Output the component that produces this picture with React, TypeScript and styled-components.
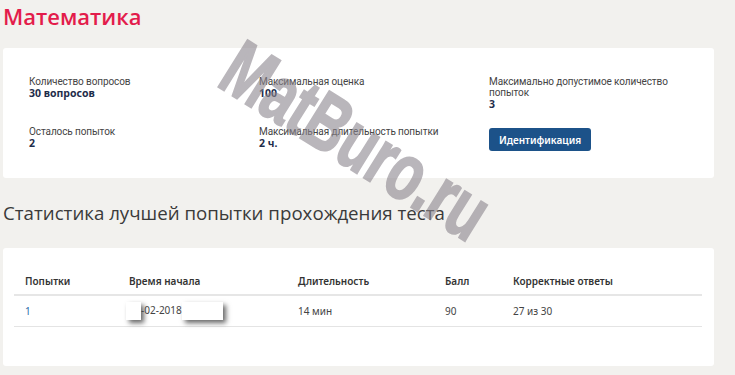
import React from "react";
import styled, { createGlobalStyle } from "styled-components";

const GlobalStyle = createGlobalStyle`
  html, body {
    margin: 0;
    padding: 0;
    background: #f2f1ee;
  }
  body {
    font-family: "Open Sans", "Noto Sans", sans-serif;
    color: #333333;
  }
`;

const Page = styled.div`
  position: relative;
  width: 735px;
  height: 375px;
  overflow: hidden;
  padding: 0 21px 0 3px;
  box-sizing: border-box;
`;

const Title = styled.h1`
  margin: 0;
  padding-top: 1px;
  font-size: 22px;
  line-height: 30px;
  font-weight: 600;
  color: #e31c4b;
`;

const Card = styled.section<{ $top: number; $height: number }>`
  margin-top: ${(p) => p.$top}px;
  height: ${(p) => p.$height}px;
  background: #ffffff;
  border-radius: 3px;
  box-sizing: border-box;
`;

const InfoGrid = styled.div`
  display: grid;
  grid-template-columns: 230px 230px 200px;
  row-gap: 16px;
  padding: 28px 0 0 26px;
`;

const InfoItem = styled.div`
  display: flex;
  flex-direction: column;
  align-items: flex-start;
`;

const Label = styled.span`
  font-family: Roboto, "Noto Sans", sans-serif;
  font-size: 10px;
  line-height: 11px;
  letter-spacing: -0.1px;
  color: #444444;
`;

const Value = styled.span`
  font-family: "Noto Sans", "Open Sans", sans-serif;
  font-size: 10.5px;
  line-height: 12px;
  font-weight: 700;
  color: #1e2d4b;
`;

const IdButton = styled.button`
  margin-top: 2px;
  width: 102px;
  height: 23px;
  padding: 0;
  border: none;
  border-radius: 3px;
  background: #1c5289;
  color: #ffffff;
  font-family: "Noto Sans", "Open Sans", sans-serif;
  font-size: 10px;
  font-weight: 600;
  cursor: pointer;
`;

const SectionTitle = styled.h2`
  margin: 0;
  padding-top: 22px;
  font-size: 18.7px;
  line-height: 26px;
  font-weight: 400;
  color: #3a3a3a;
`;

const Spacer = styled.div`
  height: 20px;
`;

const Table = styled.table`
  margin: 0 12px 0 11px;
  width: calc(100% - 23px);
  border-collapse: collapse;
  table-layout: fixed;
  font-family: "Noto Sans", "Open Sans", sans-serif;
  font-size: 10px;
`;

const HeadCell = styled.th<{ $w?: number }>`
  width: ${(p) => (p.$w ? `${p.$w}px` : "auto")};
  height: 26px;
  padding: 0 0 0 11px;
  text-align: left;
  font-weight: 600;
  color: #333333;
  border-bottom: 2px solid #e6e6e6;
`;

const Cell = styled.td<{ $link?: boolean }>`
  height: 30px;
  padding: 0 0 0 11px;
  color: ${(p) => (p.$link ? "#2c6aa8" : "#444444")};
  border-bottom: 1px solid #e4e4e4;
  white-space: nowrap;
`;

const Redact = styled.span<{ $w: number; $shift?: number }>`
  display: inline-block;
  width: ${(p) => p.$w}px;
  height: 18px;
  margin-left: ${(p) => p.$shift ?? 0}px;
  vertical-align: middle;
  background: #ffffff;
  box-shadow: 3px 3px 5px rgba(0, 0, 0, 0.6);
`;

const Watermark = styled.div`
  position: absolute;
  left: 356px;
  top: 141px;
  transform: translate(-50%, -50%) rotate(32deg) scaleX(0.7);
  font-family: "Liberation Sans", Arial, sans-serif;
  font-size: 80px;
  font-weight: 700;
  line-height: 1;
  white-space: nowrap;
  color: #8c868e;
  -webkit-text-stroke: 2px #8c868e;
  opacity: 0.6;
  pointer-events: none;
`;

const info = [
  { label: "Количество вопросов", value: "30 вопросов" },
  { label: "Максимальная оценка", value: "100" },
  { label: "Максимально допустимое количество попыток", value: "3" },
  { label: "Осталось попыток", value: "2" },
  { label: "Максимальная длительность попытки", value: "2 ч." },
];

export default function App() {
  return (
    <Page>
      <GlobalStyle />
      <Title>Математика</Title>
      <Card $top={17} $height={130}>
        <InfoGrid>
          {info.map((it) => (
            <InfoItem key={it.label}>
              <Label>{it.label}</Label>
              <Value>{it.value}</Value>
            </InfoItem>
          ))}
          <InfoItem>
            <IdButton>Идентификация</IdButton>
          </InfoItem>
        </InfoGrid>
      </Card>
      <SectionTitle>Статистика лучшей попытки прохождения теста</SectionTitle>
      <Card $top={22} $height={118}>
        <Spacer />
        <Table>
          <thead>
            <tr>
              <HeadCell $w={93}>Попытки</HeadCell>
              <HeadCell $w={158}>Время начала</HeadCell>
              <HeadCell $w={136}>Длительность</HeadCell>
              <HeadCell $w={57}>Балл</HeadCell>
              <HeadCell>Корректные ответы</HeadCell>
            </tr>
          </thead>
          <tbody>
            <tr>
              <Cell $link>1</Cell>
              <Cell>
                <Redact $w={15} $shift={-3} />-02-2018<Redact $w={41} />
              </Cell>
              <Cell>14 мин</Cell>
              <Cell>90</Cell>
              <Cell>27 из 30</Cell>
            </tr>
          </tbody>
        </Table>
      </Card>
      <Watermark>MatBuro.ru</Watermark>
    </Page>
  );
}
